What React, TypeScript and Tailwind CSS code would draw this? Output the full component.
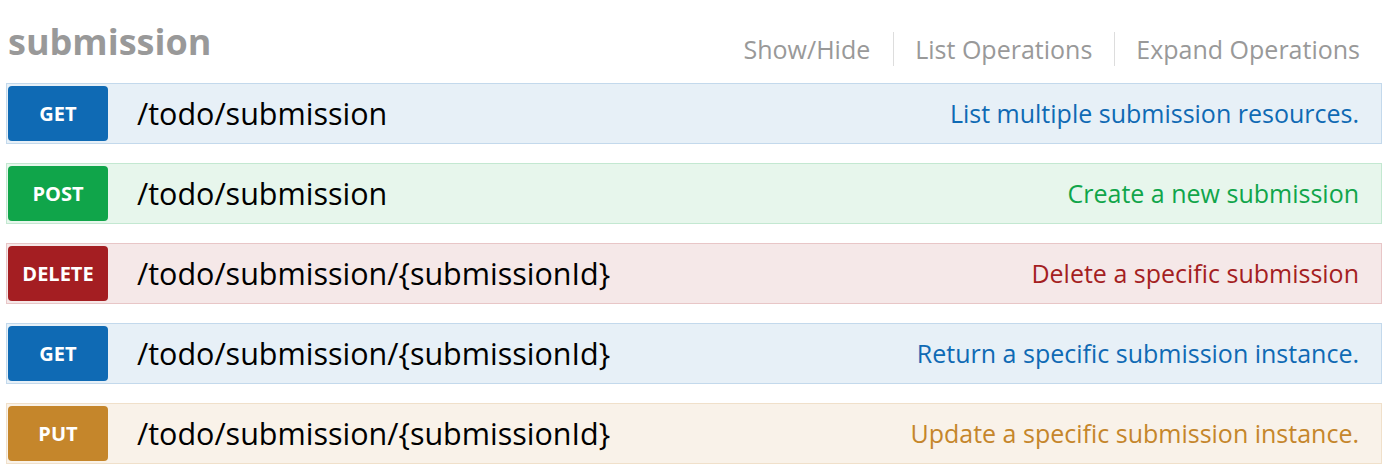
import React from "react";

type Op = {
  method: string;
  path: string;
  desc: string;
  badge: string;
  bg: string;
  border: string;
  text: string;
};

const ops: Op[] = [
  {
    method: "GET",
    path: "/todo/submission",
    desc: "List multiple submission resources.",
    badge: "bg-[#0f6ab4]",
    bg: "bg-[#e7f0f7]",
    border: "border-[#c3d9ec]",
    text: "text-[#0f6ab4]",
  },
  {
    method: "POST",
    path: "/todo/submission",
    desc: "Create a new submission",
    badge: "bg-[#10a54a]",
    bg: "bg-[#e7f6ec]",
    border: "border-[#c3e8d1]",
    text: "text-[#10a54a]",
  },
  {
    method: "DELETE",
    path: "/todo/submission/{submissionId}",
    desc: "Delete a specific submission",
    badge: "bg-[#a41e22]",
    bg: "bg-[#f5e8e8]",
    border: "border-[#e8c6c7]",
    text: "text-[#a41e22]",
  },
  {
    method: "GET",
    path: "/todo/submission/{submissionId}",
    desc: "Return a specific submission instance.",
    badge: "bg-[#0f6ab4]",
    bg: "bg-[#e7f0f7]",
    border: "border-[#c3d9ec]",
    text: "text-[#0f6ab4]",
  },
  {
    method: "PUT",
    path: "/todo/submission/{submissionId}",
    desc: "Update a specific submission instance.",
    badge: "bg-[#c5862b]",
    bg: "bg-[#f9f2e9]",
    border: "border-[#f0e0ca]",
    text: "text-[#c5862b]",
  },
];

export default function App() {
  return (
    <div
      className="w-[1396px] h-[472px] bg-white pl-[6px] pr-[14px] overflow-hidden"
      style={{ fontFamily: '"Open Sans", "Noto Sans", sans-serif' }}
    >
      <div className="flex justify-between items-start h-[83px]">
        <h2 className="mt-[20px] ml-[2px] text-[36px] leading-[44px] font-bold text-[#999999]">
          submission
        </h2>
        <div className="flex items-center mt-[32px] pr-[22px] text-[25px] leading-[34px] text-[#999999]">
          <span className="pr-[23px]">Show/Hide</span>
          <span className="pl-[21px] pr-[22px] border-l border-[#dddddd]">List Operations</span>
          <span className="pl-[21px] border-l border-[#dddddd]">Expand Operations</span>
        </div>
      </div>
      <div className="flex flex-col gap-[19px]">
        {ops.map((op, i) => (
          <div
            key={i}
            className={`flex items-center border ${op.border} ${op.bg} pl-px pr-[22px] py-[2px]`}
          >
            <div
              className={`w-[100px] h-[55px] rounded-[4px] ${op.badge} flex items-center justify-center text-white text-[20px] font-bold`}
            >
              {op.method}
            </div>
            <div className="ml-[29px] text-[30.5px] text-black flex-1">{op.path}</div>
            <div className={`text-[25px] ${op.text}`}>{op.desc}</div>
          </div>
        ))}
      </div>
    </div>
  );
}
